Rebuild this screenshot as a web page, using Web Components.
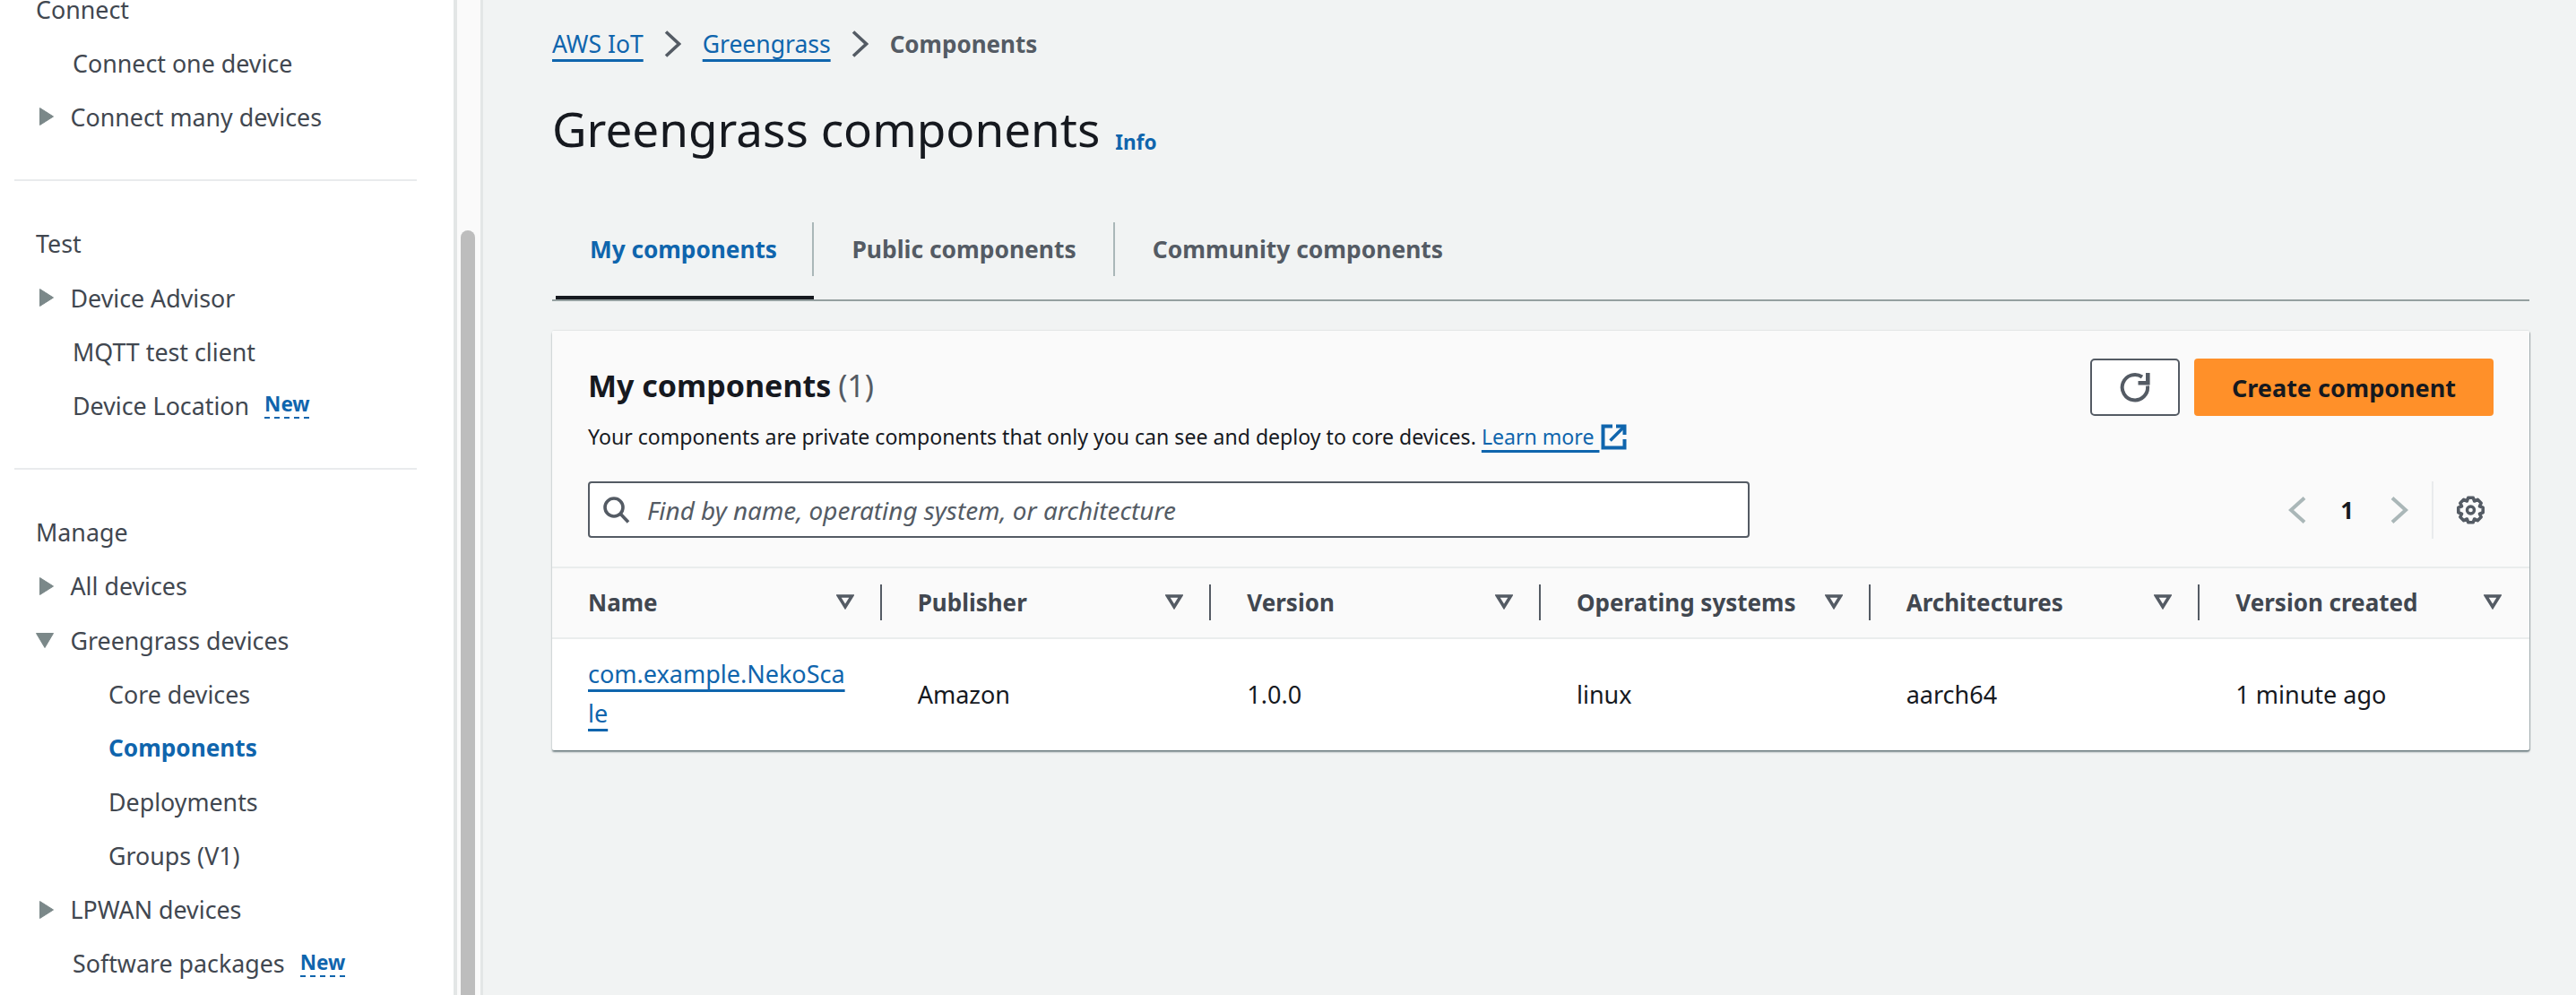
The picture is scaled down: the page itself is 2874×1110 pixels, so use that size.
<!DOCTYPE html>
<html lang="en"><head><meta charset="utf-8"><title>Greengrass components</title>
<style>
html,body{margin:0;height:1110px;overflow:hidden;background:#f1f3f3;font-family:"Noto Sans",sans-serif;color:#16191f}
</style></head><body>
<aws-app>
  <aws-sidenav slot="nav">
    <nav-section>
      <nav-item kind="head">Connect</nav-item>
      <nav-item kind="plain">Connect one device</nav-item>
      <nav-item kind="right">Connect many devices</nav-item>
    </nav-section>
    <nav-section>
      <nav-item kind="head">Test</nav-item>
      <nav-item kind="right">Device Advisor</nav-item>
      <nav-item kind="plain">MQTT test client</nav-item>
      <nav-item kind="plain">Device Location <new-badge>New</new-badge></nav-item>
    </nav-section>
    <nav-section last>
      <nav-item kind="head">Manage</nav-item>
      <nav-item kind="right">All devices</nav-item>
      <nav-item kind="down">Greengrass devices</nav-item>
      <nav-item kind="sub">Core devices</nav-item>
      <nav-item kind="sub" active>Components</nav-item>
      <nav-item kind="sub">Deployments</nav-item>
      <nav-item kind="sub">Groups (V1)</nav-item>
      <nav-item kind="right">LPWAN devices</nav-item>
      <nav-item kind="plain">Software packages <new-badge>New</new-badge></nav-item>
    </nav-section>
  </aws-sidenav>
  <aws-breadcrumbs><crumb-link>AWS IoT</crumb-link><crumb-sep></crumb-sep><crumb-link>Greengrass</crumb-link><crumb-sep></crumb-sep><crumb-current>Components</crumb-current></aws-breadcrumbs>
  <page-title>Greengrass components</page-title>
  <aws-tabs>
    <aws-tab active>My components</aws-tab>
    <aws-tab second>Public components</aws-tab>
    <aws-tab last>Community components</aws-tab>
  </aws-tabs>
  <component-card></component-card>
</aws-app>
<script>
const def=(name,css,html)=>customElements.define(name,class extends HTMLElement{
  constructor(){super();this.attachShadow({mode:'open'}).innerHTML='<style>'+css+'</style>'+html;}
});
const gear=(()=>{const cx=16.5,cy=16,n=8,out=14,inn=10.8;let d='';
  for(let i=0;i<n;i++){const a=i*2*Math.PI/n-Math.PI/2;
    const pts=[[inn,-.39],[out,-.2],[out,.2],[inn,.39]];
    pts.forEach((p,j)=>{const t=a+p[1];d+=(i==0&&j==0?'M':'L')+(cx+p[0]*Math.cos(t)).toFixed(2)+' '+(cy+p[0]*Math.sin(t)).toFixed(2)+' ';});}
  return d+'Z';})();

def('aws-app',`:host{display:grid;grid-template-columns:539px 1fr;height:1110px;overflow:hidden}
 main{padding:27px 52px 0 77px;min-width:0}`,
 `<slot name="nav"></slot><main><slot></slot></main>`);

def('aws-sidenav',`:host{display:flex;height:1110px;overflow:hidden;border-right:3px solid #e3e6e6;box-sizing:border-box}
 .list{width:506px;background:#fff;border-right:4px solid #e3e6e6;box-sizing:content-box;overflow:hidden;flex:none}
 .in{margin-top:-20px}
 .track{flex:1;background:#fafafa;padding:257px 6px 0 4px}
 .thumb{height:900px;background:#bdbdbd;border-radius:8px 8px 0 0}`,
 `<div class="list"><div class="in"><slot></slot></div></div><div class="track"><div class="thumb"></div></div>`);

def('nav-section',`:host{display:block;margin:0 41px 39.6px 16px;padding:0 0 40px;border-bottom:2px solid #e9ebed}
 :host([last]){border:0}`,`<slot></slot>`);

def('nav-item',`:host{display:flex;align-items:center;height:60.1px;font-size:26.8px;color:#414750;white-space:pre;position:relative}
 :host([kind=head]){padding-left:24px}
 :host([kind=plain]){padding-left:65px}
 :host([kind=right]),:host([kind=down]){padding-left:28px}
 :host([kind=sub]){padding-left:105px}
 :host([active]){color:#0f65ad;font-weight:700;font-size:26.2px}
 svg{display:none;width:22px;height:22px;margin-right:12.5px;flex:none}
 :host([kind=right]) .r,:host([kind=down]) .d{display:block}
 :host([kind=down]) svg{margin-left:-4px;margin-right:16.5px}
 path{fill:#7b8889;stroke:#7b8889;stroke-width:1;stroke-linejoin:round}`,
 `<svg class="r" viewBox="0 0 22 22"><path d="M.5 1.5 15.5 11 .5 20.5Z"/></svg><svg class="d" viewBox="0 0 22 22"><path d="M.5 3.5H19.5L10 19.5Z"/></svg><slot></slot>`);

def('new-badge',`:host{display:inline-block;font-size:22.5px;font-weight:700;color:#0f65ad;line-height:28px;padding-bottom:2px;margin-left:10px;vertical-align:-6px;background:repeating-linear-gradient(90deg,#0f65ad 0 6px,transparent 6px 11px) left bottom/100% 2px no-repeat}`,`<slot></slot>`);

def('aws-breadcrumbs',`:host{display:flex;align-items:center;height:44px;font-size:26.5px}`,`<slot></slot>`);
def('crumb-link',`:host{display:block;color:#0f65ad;line-height:44px;text-decoration:underline;text-decoration-thickness:2.5px;text-underline-offset:7px}`,`<slot></slot>`);
def('crumb-current',`:host{display:block;color:#545b64;font-weight:700;font-size:26px}`,`<slot></slot>`);
def('crumb-sep',`:host{display:block;width:19px;height:30px;margin:0 23.5px}
 svg{display:block}`,`<svg width="19" height="30" viewBox="0 0 19 30"><path d="M2 1.5 16.5 15 2 28.5" fill="none" stroke="#545b64" stroke-width="3.6"/></svg>`);

def('page-title',`:host{display:flex;align-items:center;height:60px;margin-top:46px}
 h1{margin:0 0 6px;font-size:53px;font-weight:400;color:#16191f;line-height:60px}
 span{font-size:22.5px;font-weight:700;color:#0f65ad;margin:22px 0 0 17px}`,`<h1><slot></slot></h1><span>Info</span>`);

def('aws-tabs',`:host{display:flex;margin-top:71px;border-bottom:2px solid #95a0a0}`,`<slot></slot>`);
def('aws-tab',`:host{display:block;height:82px;border-bottom:4px solid transparent;font-size:26.4px;font-weight:700;color:#545b64}
 :host([active]){color:#0f65ad;border-bottom-color:#16191f;margin-left:4px;font-size:26.2px}
 div{height:60px;line-height:60px;padding:0 39px 0 42px;border-right:2px solid #aab7b8}
 :host([active]) div{padding:0 39.5px 0 38px}
 :host([second]) div{padding-right:41px}
 :host([last]) div{border-right:0}`,`<div><slot></slot></div>`);

def('icon-button',`:host{display:flex;align-items:center;justify-content:center;width:100px;height:64px;box-sizing:border-box;background:#fff;border:2.5px solid #545b64;border-radius:5px}
 svg{display:block}`,`<svg width="34" height="34" viewBox="0 0 34 34" fill="none" stroke="#545b64" stroke-width="4"><path d="M25 5.5A14.2 14.2 0 1 0 31 15.5"/><path d="M31.3 1V12.3H20.5" stroke-width="4.6"/></svg>`);
def('primary-button',`:host{display:flex;align-items:center;justify-content:center;width:334px;height:64px;background:#ff9029;border-radius:4px;font-size:27px;font-weight:700;color:#16191f}`,`<slot></slot>`);

def('search-box',`:host{display:flex;align-items:center;width:1296px;height:63px;box-sizing:border-box;background:#fff;border:2.5px solid #545b64;border-radius:4px;padding-left:15px}
 svg{flex:none;margin-right:19px}
 i{font-size:27.9px;color:#545b64;font-style:italic}`,
 `<svg width="30" height="30" viewBox="0 0 30 30" fill="none" stroke="#545b64" stroke-width="3.6"><circle cx="12" cy="12" r="10"/><path d="M19 19 28 28.5"/></svg><i><slot></slot></i>`);

def('table-head',`:host{display:flex;align-items:center;height:76px;padding:0 0 1px 40px;box-sizing:border-box;position:relative;font-size:26px;font-weight:700;color:#414750}
 .t{flex:1}
 svg{margin-right:29px;flex:none}
 .s{width:2px;height:40px;background:#545b64;flex:none}
 :host([last]) .s{background:transparent}`,
 `<span class="t"><slot></slot></span><svg width="20" height="17" viewBox="0 0 20 17" fill="none" stroke="#545b64" stroke-width="3.5"><path d="M2.5 2H17.5L10 14Z"/></svg><span class="s"></span>`);

def('table-cell',`:host{display:flex;align-items:center;min-height:124px;padding-left:40px;padding-bottom:2px;font-size:27px;color:#16191f;box-sizing:border-box}`,
 `<slot></slot>`);
def('cell-link',`:host{display:block;width:291px;word-break:break-all;color:#0f65ad;line-height:44px;text-decoration:underline;text-decoration-thickness:2.5px;text-underline-offset:7px}`,`<slot></slot>`);

def('component-card',`:host{display:block;margin-top:33px;background:#fff;box-shadow:0 2px 2px rgba(0,28,36,.45),1px 1px 1px rgba(0,28,36,.25),0 -1px 1px rgba(0,28,36,.06);border-radius:2px;overflow:hidden}
 header{background:#fafafa;padding:31px 40px 32px;border-bottom:2px solid #eaeded}
 .top{display:flex;justify-content:space-between;height:137px}
 .left{padding-top:8px}
 h2{margin:0;font-size:34px;line-height:44px;font-weight:700;color:#16191f}
 h2 span{font-weight:400;color:#545b64;margin-left:-1px}
 p{margin:13px 0 0;font-size:23.1px;line-height:44px;color:#16191f;display:flex;align-items:center;white-space:pre}
 p b{font-weight:400;color:#0f65ad;text-decoration:underline;text-decoration-thickness:2.5px;text-underline-offset:6px}
 p svg{margin-left:2px}
 .acts{display:flex;gap:16px;align-items:flex-start}
 .row{display:flex;align-items:center;justify-content:space-between;height:63px}
 .pg{display:flex;align-items:center;font-size:26px;font-weight:700;padding-right:9px}
 .pg .n{margin:0 41px 0 38px}
 .pg .d{width:2px;height:64px;background:#e9ebed;margin:0 25px 0 26px}
 .pg svg{display:block}
 .grid{display:grid;grid-template-columns:repeat(6,1fr)}
 .hd{background:#fafafa;border-bottom:2px solid #eaeded;padding-bottom:1px}`,
 `<header>
   <div class="top"><div class="left"><h2>My components <span>(1)</span></h2><p>Your components are private components that only you can see and deploy to core devices. <b>Learn more </b><svg width="29" height="29" viewBox="0 0 29 29" fill="none" stroke="#0f65ad" stroke-width="4"><path d="M13 2.5H2.5V26.5H26.5V17"/><path d="M17 2.5H26.5V12"/><path d="M26.5 2.5 10.5 18.5" stroke-width="3.6"/></svg></p></div>
   <div class="acts"><icon-button></icon-button><primary-button>Create component</primary-button></div></div>
   <div class="row"><search-box>Find by name, operating system, or architecture</search-box>
   <div class="pg"><svg width="20" height="30" viewBox="0 0 20 30" fill="none" stroke="#aab7b8" stroke-width="4"><path d="M18 1.5 3 15 18 28.5"/></svg><span class="n">1</span><svg width="20" height="30" viewBox="0 0 20 30" fill="none" stroke="#aab7b8" stroke-width="4"><path d="M2 1.5 17 15 2 28.5"/></svg><span class="d"></span><svg width="33" height="32" viewBox="0 0 33 32" fill="none" stroke="#545b64" stroke-width="3.6" stroke-linejoin="round"><path d="${gear}"/><circle cx="16.5" cy="16" r="4" stroke-width="3.4"/></svg></div></div>
 </header>
 <div class="grid hd"><table-head>Name</table-head><table-head>Publisher</table-head><table-head>Version</table-head><table-head>Operating systems</table-head><table-head>Architectures</table-head><table-head last>Version created</table-head></div>
 <div class="grid"><table-cell><cell-link>com.example.NekoScale</cell-link></table-cell><table-cell>Amazon</table-cell><table-cell>1.0.0</table-cell><table-cell>linux</table-cell><table-cell>aarch64</table-cell><table-cell>1 minute ago</table-cell></div>`);
</script>
</body></html>
